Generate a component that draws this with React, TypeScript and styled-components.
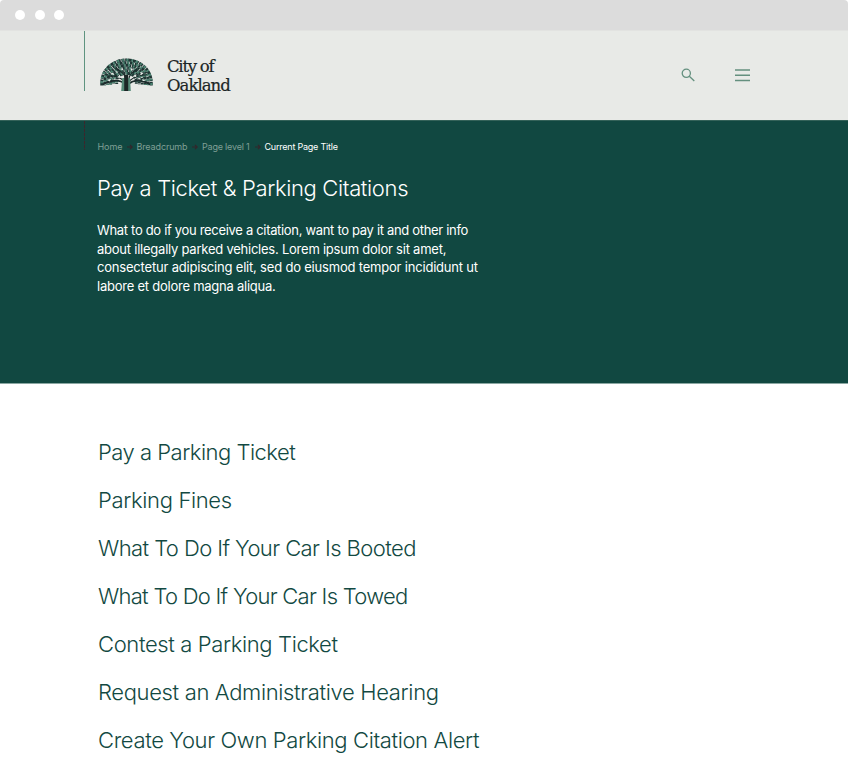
import React from "react";
import styled, { createGlobalStyle } from "styled-components";

const Global = createGlobalStyle`
  * { box-sizing: border-box; }
  html, body { margin: 0; padding: 0; background: #fff; }
  body { font-family: Inter, "Liberation Sans", sans-serif; overflow: hidden; }
`;
const Page = styled.div`
  width: 848px; height: 778px; background: #fff; overflow: hidden;
`;
const WindowBar = styled.div`
  height: 30px; background: #dcdcdc; border-radius: 4px 4px 0 0;
  display: flex; align-items: center; gap: 9.5px; padding: 0 0 1px 15px;
`;
const Dot = styled.span`
  width: 10px; height: 10px; border-radius: 50%; background: #fff;
`;
const Header = styled.header`
  height: 90px; background: #e8eae7; display: flex; align-items: flex-start; padding-left: 84px;
  border-top: 1px solid #e2e3e1;
`;
const Rule = styled.div`
  width: 1px; height: 60px; background: #5f9480;
`;
const Tree = styled.svg`
  width: 56px; height: 34px; margin: 27px 0 0 13px;
`;
const Wordmark = styled.div`
  margin: 26px 0 0 13px; width: 66px; height: 40px;
  font: 16.5px/19px "DejaVu Serif", serif; color: #1c2626;
  -webkit-text-stroke: 0.2px #1c2626;
`;
const Word = styled.div<{ $ls: number }>`
  letter-spacing: ${(p) => p.$ls}px; white-space: nowrap;
`;
const Tools = styled.div`
  margin-left: auto; padding: 37px 98px 0 0; display: flex; gap: 39px;
`;
const Icon = styled.svg`
  width: 15px; height: 14px; fill: none; stroke: #64907f;
`;
const Hero = styled.section`
  height: 264px; background: #114841; color: #fff; display: flex; padding-left: 84px;
  border-top: 1px solid #346259; border-bottom: 1px solid #8aa7a2;
`;
const DashedRule = styled.div`
  width: 1px; height: 29px;
  background: repeating-linear-gradient(#3d262c 0 3px, #1a3f3b 3px 4px);
`;
const HeroBody = styled.div`
  padding: 17px 0 0 12px;
`;
const Crumbs = styled.nav`
  display: flex; align-items: center; height: 16px; font-size: 9px; padding-left: 0.5px;
`;
const Crumb = styled.span<{ $w: number; $ls: number; $current?: boolean }>`
  width: ${(p) => p.$w}px; letter-spacing: ${(p) => p.$ls}px; white-space: nowrap;
  color: ${(p) => (p.$current ? "#fff" : "#7f9f95")};
`;
const Arrow = styled.svg`
  width: 6px; height: 6px; margin: 1px 4px 0; fill: none; stroke: #33262b; stroke-width: 1.2; flex: none;
`;
const Title = styled.h1<{ $ls: number }>`
  margin: 20px 0 0; font-size: 22px; font-weight: 300; line-height: 28px; white-space: nowrap;
  letter-spacing: ${(p) => p.$ls}px;
`;
const Intro = styled.p`
  margin: 19.4px 0 0; font-size: 13px; line-height: 18.4px;
`;
const Line = styled.span<{ $ls: number }>`
  display: block; white-space: nowrap; letter-spacing: ${(p) => p.$ls}px;
`;
const Links = styled.ul`
  list-style: none; margin: 0; padding: 44px 0 0 98px;
`;
const LinkItem = styled.li<{ $ls: number }>`
  height: 48px; line-height: 48px; font-size: 22px; font-weight: 300; color: #124942;
  letter-spacing: ${(p) => p.$ls}px; white-space: nowrap;
`;

const links: [string, number][] = [
  ["Pay a Parking Ticket", -0.5],
  ["Parking Fines", -0.35],
  ["What To Do If Your Car Is Booted", -0.58],
  ["What To Do If Your Car Is Towed", -0.73],
  ["Contest a Parking Ticket", -0.37],
  ["Request an Administrative Hearing", -0.35],
  ["Create Your Own Parking Citation Alert", -0.37],
];
const lines: [string, number][] = [
  ["What to do if you receive a citation, want to pay it and other info", -0.32],
  ["about illegally parked vehicles. Lorem ipsum dolor sit amet,", -0.235],
  ["consectetur adipiscing elit, sed do eiusmod tempor incididunt ut", -0.195],
  ["labore et dolore magna aliqua.", -0.24],
];
const rings = [
  [24.8, 22.6], [21.8, 19.6], [18.8, 16.6], [15.8, 13.6], [12.8, 10.6], [9.8, 7.8],
];

function OakTree() {
  return (
    <Tree viewBox="0 0 56 34" fill="none">
      {rings.map(([rx, ry], i) => {
        const y = 24.5 - i * 0.3;
        const cx = 28.5;
        const d = `M${cx - rx} ${y + 3}V${y}A${rx} ${ry} 0 0 1 ${cx + rx} ${y}V${y + 3}`;
        return (
          <g key={rx} strokeWidth="2.9">
            <path d={d} stroke="#1f3634" strokeDasharray="3.2 .6 2.3 .7 4.1 .7" strokeDashoffset={i * 2.7} />
            <path d={d} stroke="#4a8371" strokeWidth="2.5" strokeDasharray="1.6 2.7 2.1 3" strokeDashoffset={i * 3.9 + 2} />
          </g>
        );
      })}
      <g stroke="#1c2b2b" strokeWidth="1.2" transform="translate(1.2 0)">
        <path d="M26 31V19Q24 14 16 10M30 31V19Q32 14 40 10M25 23Q18 17 8 18M30 23Q37 17 47 17" />
        <path d="M26 26Q18 19 3.500 26.500M29 26Q38 19 51 26.500" strokeWidth="1.8" />
      </g>
      <path transform="translate(1.2 0)" d="M11 16l3-1.500 1 2.500zM18 19.500l2.500-2.500 1 3zM34 18.500l3-2.500 0 3zM41 14l3.500 1-2.500 2zM21 11l2.400-.8.5 2.400zM31.500 10l2.500 1-2 2zM8 22l4-1.200-1.500 2.600zM43 21l3.500 1.800-3 .3zM16 14l2-1 .5 2zM38 21l2.500-1.500.5 2zM14 21.500l2-1.200.4 1.600z" fill="#e8eae7" />
      <path d="M23.200 33L24.200 20h3v13zM30 33V20h2l.8 13z" fill="#568a78" />
      <path d="M26.200 33V17h4v16z" fill="#1c2626" />
    </Tree>
  );
}

const CrumbArrow = () => (
  <Arrow viewBox="0 0 6 6"><path d="M0 3h5M3 .8l2.200 2.200L3 5.200" /></Arrow>
);

export default function App() {
  return (
    <Page>
      <Global />
      <WindowBar><Dot /><Dot /><Dot /></WindowBar>
      <Header>
        <Rule />
        <OakTree />
        <Wordmark><Word $ls={-1.25}>City of</Word><Word $ls={-0.98}>Oakland</Word></Wordmark>
        <Tools>
          <Icon viewBox="0 0 15 14" strokeWidth="1.3"><circle cx="5.3" cy="5.3" r="4.1" /><path d="M8.3 8.3l5 4.7" /></Icon>
          <Icon viewBox="0 0 15 14" strokeWidth="1.5"><path d="M0 1.9h15M0 7.2h15M0 12.5h15" /></Icon>
        </Tools>
      </Header>
      <Hero>
        <DashedRule />
        <HeroBody>
          <Crumbs aria-label="Breadcrumb">
            <Crumb $w={25} $ls={-0.1}>Home</Crumb><CrumbArrow />
            <Crumb $w={51.5} $ls={-0.13}>Breadcrumb</Crumb><CrumbArrow />
            <Crumb $w={48.5} $ls={-0.2}>Page level 1</Crumb><CrumbArrow />
            <Crumb $w={75} $ls={-0.22} $current>Current Page Title</Crumb>
          </Crumbs>
          <Title $ls={-0.35}>Pay a Ticket &amp; Parking Citations</Title>
          <Intro>{lines.map(([t, ls]) => <Line key={t} $ls={ls}>{t}</Line>)}</Intro>
        </HeroBody>
      </Hero>
      <Links>{links.map(([t, ls]) => <LinkItem key={t} $ls={ls}>{t}</LinkItem>)}</Links>
    </Page>
  );
}
